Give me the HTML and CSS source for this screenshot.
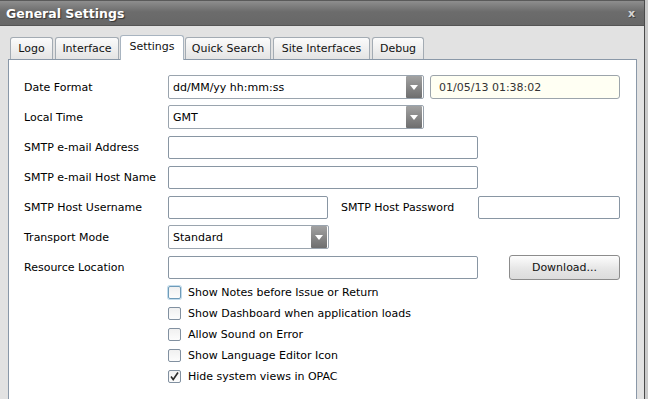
FILE: index.html
```html
<!DOCTYPE html>
<html lang="en">
<head>
    <meta charset="UTF-8">
    <title>General Settings</title>
    <link rel="stylesheet" href="styles.css">
</head>
<body>

<div class="window">
    <div class="titlebar">
        <span class="title">General Settings</span>
        <span class="close">x</span>
    </div>

    <div class="window-body">
        <div class="tabs">
            <div class="tab t-logo">Logo</div>
            <div class="tab t-interface">Interface</div>
            <div class="tab t-settings active">Settings</div>
            <div class="tab t-quick">Quick Search</div>
            <div class="tab t-site">Site Interfaces</div>
            <div class="tab t-debug">Debug</div>
        </div>

        <div class="panel">
            <div class="row">
                <span class="lbl">Date Format</span>
                <div class="select w256"><span>dd/MM/yy hh:mm:ss</span><span class="arrow"></span></div>
                <div class="readout">01/05/13 01:38:02</div>
            </div>
            <div class="row">
                <span class="lbl">Local Time</span>
                <div class="select w256"><span>GMT</span><span class="arrow"></span></div>
            </div>
            <div class="row">
                <span class="lbl">SMTP e-mail Address</span>
                <div class="field w310"></div>
            </div>
            <div class="row">
                <span class="lbl">SMTP e-mail Host Name</span>
                <div class="field w310"></div>
            </div>
            <div class="row">
                <span class="lbl">SMTP Host Username</span>
                <div class="field w160"></div>
                <span class="lbl lbl-inline">SMTP Host Password</span>
                <div class="field w142"></div>
            </div>
            <div class="row">
                <span class="lbl">Transport Mode</span>
                <div class="select w161"><span>Standard</span><span class="arrow"></span></div>
            </div>
            <div class="row">
                <span class="lbl">Resource Location</span>
                <div class="field w310"></div>
                <button class="btn">Download...</button>
            </div>

            <div class="checks">
                <div class="check"><span class="box focus"></span>Show Notes before Issue or Return</div>
                <div class="check"><span class="box"></span>Show Dashboard when application loads</div>
                <div class="check"><span class="box"></span>Allow Sound on Error</div>
                <div class="check"><span class="box"></span>Show Language Editor Icon</div>
                <div class="check">
                    <span class="box">
                        <svg width="11" height="11" viewBox="0 0 11 11"><path d="M2 5.5 L4.2 8.5 L9 1.5" fill="none" stroke="#2b2b2b" stroke-width="1.6"/></svg>
                    </span>Hide system views in OPAC
                </div>
            </div>
        </div>
    </div>
</div>

</body>
</html>
```

FILE: styles.css
```css
body {
    margin: 0;
    width: 648px;
    height: 399px;
    overflow: hidden;
    background: #c9c9c9;
    font-family: 'DejaVu Sans', Verdana, sans-serif;
    font-size: 11px;
    color: #000;
}
.window {
    width: 644px;
    height: 399px;
    overflow: hidden;
    border-right: 1px solid #4a4a4a;
    background: #e2e2e2;
    display: flex;
    flex-direction: column;
}

/* Title bar */
.titlebar {
    flex: none;
    height: 26px;
    box-sizing: border-box;
    display: flex;
    align-items: center;
    justify-content: space-between;
    padding: 0 9px 0 6px;
    background: linear-gradient(#8e8e8e, #6c6c6c 45%, #676767);
    border-top: 1px solid #5a5a5a;
    border-bottom: 1px solid #555;
}
.title {
    color: #fff;
    font-weight: bold;
    font-size: 12.5px;
    text-shadow: 1px 1px 1px #333;
}
.close {
    color: #d4d4d4;
    font-weight: bold;
    font-size: 11px;
    text-shadow: 1px 1px 0 #444;
}

/* Tabs */
.window-body { flex: none; padding-top: 9px; }
.tabs { display: flex; gap: 2px; margin-left: 10px; align-items: flex-end; position: relative; z-index: 1; }
.tab {
    height: 22px;
    box-sizing: border-box;
    padding-top: 4px;
    text-align: center;
    border: 1px solid #a3abb3;
    border-bottom: none;
    border-radius: 3px 3px 0 0;
    background: linear-gradient(#fbfbfb, #e4e4e4);
    color: #111;
}
.tab.active {
    height: 25px;
    padding-top: 4px;
    background: #fff;
    margin-bottom: -1px;
    border-color: #a8b4c0;
}
.t-logo { width: 43px; }
.t-interface { width: 64px; }
.t-settings { width: 64px; margin: 0 -1px; }
.t-quick { width: 86px; }
.t-site { width: 97px; }
.t-debug { width: 52px; }

/* Panel */
.panel {
    margin-left: 8px;
    width: 629px;
    height: 360px;
    box-sizing: border-box;
    background: #fff;
    border: 1px solid #8a98a8;
    padding: 15px 0 0 15px;
}
.row {
    display: flex;
    align-items: center;
    height: 24px;
    margin-bottom: 6px;
}
.lbl { width: 144px; flex: none; }
.lbl-inline { width: 137px; margin-left: 13px; }

.field, .select, .readout {
    height: 24px;
    box-sizing: border-box;
    border: 1px solid #8996a3;
    border-radius: 2px;
    background: #fff;
    flex: none;
}
.field { height: 23px; }
.w310 { width: 310px; }
.w160 { width: 160px; }
.w142 { width: 142px; }
.w256 { width: 256px; }
.w161 { width: 161px; }

.select {
    display: flex;
    align-items: center;
    justify-content: space-between;
    padding: 0 1px 0 4px;
    border-color: #9aa4ae;
}
.arrow {
    width: 16px;
    height: 22px;
    background: linear-gradient(#a2a2a2, #6e6e6e);
    border-radius: 1px;
    position: relative;
}
.arrow::after {
    content: "";
    position: absolute;
    left: 4px;
    top: 9px;
    border-left: 4px solid transparent;
    border-right: 4px solid transparent;
    border-top: 5px solid #fff;
}
.readout {
    width: 190px;
    margin-left: 6px;
    background: #fffff3;
    padding: 5px 0 0 8px;
    color: #333;
    border-color: #9ca4ab;
    border-radius: 3px;
}

.btn {
    margin-left: 31px;
    width: 111px;
    height: 25px;
    border: 1px solid #8c8c8c;
    border-radius: 3px;
    background: linear-gradient(#fdfdfd, #e6e6e6 55%, #dcdcdc);
    font-family: inherit;
    font-size: 11px;
    color: #111;
    padding: 0;
}

/* Checkboxes */
.checks { margin: -3px 0 0 144px; }
.check {
    display: flex;
    align-items: center;
    height: 21px;
    gap: 7px;
}
.box {
    width: 13px;
    height: 13px;
    box-sizing: border-box;
    border: 1px solid #8190a0;
    border-radius: 2px;
    background: linear-gradient(#f0f0f0, #fcfcfc);
    display: flex;
    align-items: center;
    justify-content: center;
}
.box.focus { border-color: #6e9bb9; box-shadow: 0 0 0 1px #c3dcec; }
```
